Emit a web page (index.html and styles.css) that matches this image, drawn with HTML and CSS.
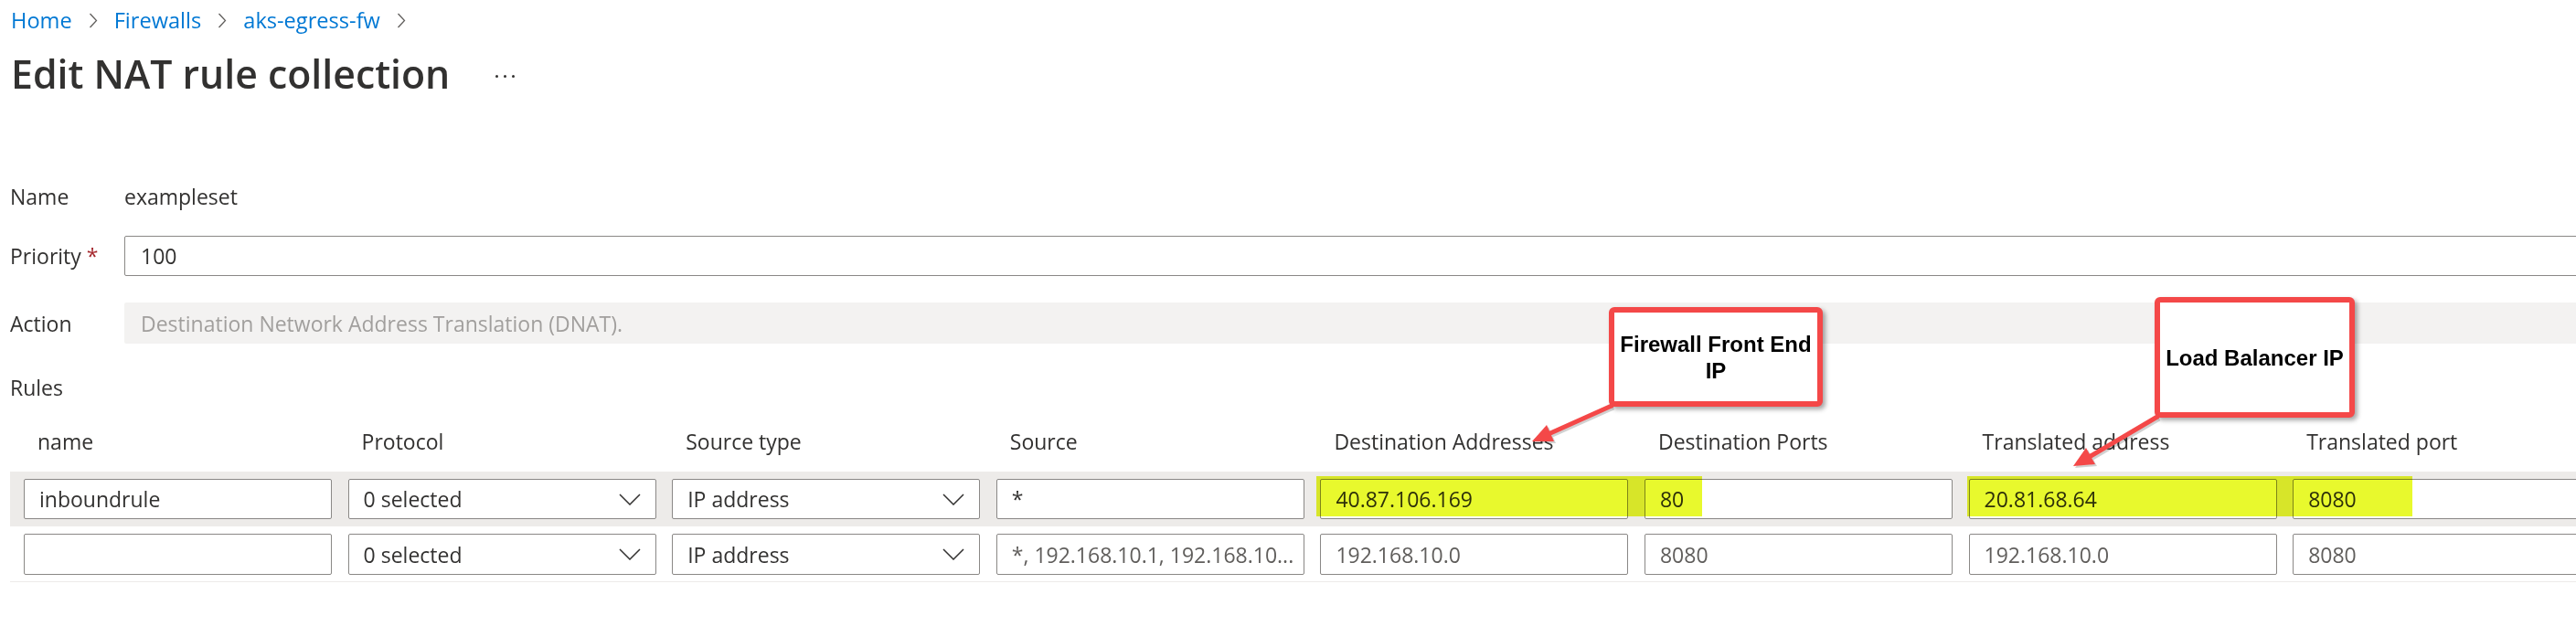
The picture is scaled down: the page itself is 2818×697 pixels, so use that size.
FILE: index.html
```html
<!DOCTYPE html>
<html lang="en">
<head>
<meta charset="utf-8">
<title>Edit NAT rule collection</title>
<link rel="stylesheet" href="styles.css">
</head>
<body>
<div class="page">
  <nav class="breadcrumb">
    <a class="crumb" href="#">Home</a>
    <svg class="crumb-sep" width="10" height="17" viewBox="0 0 10 17"><path d="M1.5 1 L8.5 8.5 L1.5 16" fill="none" stroke="#605e5c" stroke-width="1.3"/></svg>
    <a class="crumb" href="#">Firewalls</a>
    <svg class="crumb-sep" width="10" height="17" viewBox="0 0 10 17"><path d="M1.5 1 L8.5 8.5 L1.5 16" fill="none" stroke="#605e5c" stroke-width="1.3"/></svg>
    <a class="crumb" href="#">aks-egress-fw</a>
    <svg class="crumb-sep" width="10" height="17" viewBox="0 0 10 17"><path d="M1.5 1 L8.5 8.5 L1.5 16" fill="none" stroke="#605e5c" stroke-width="1.3"/></svg>
  </nav>

  <header class="title-row">
    <h1 class="title">Edit NAT rule collection</h1>
    <span class="more"><i></i><i></i><i></i></span>
  </header>

  <section class="form">
    <div class="form-row name-row">
      <div class="label">Name</div>
      <div class="value">exampleset</div>
    </div>
    <div class="form-row priority-row">
      <div class="label">Priority <span class="req">*</span></div>
      <div class="field">100</div>
    </div>
    <div class="form-row action-row">
      <div class="label">Action</div>
      <div class="field disabled">Destination Network Address Translation (DNAT).</div>
    </div>
  </section>

  <div class="rules-label">Rules</div>

  <div class="rules">
    <div class="grid header">
      <div class="th">name</div>
      <div class="th">Protocol</div>
      <div class="th">Source type</div>
      <div class="th">Source</div>
      <div class="th">Destination Addresses</div>
      <div class="th">Destination Ports</div>
      <div class="th">Translated address</div>
      <div class="th">Translated port</div>
    </div>
    <div class="grid row selected">
      <div class="cell">inboundrule</div>
      <div class="cell select"><span>0 selected</span><svg width="24" height="13" viewBox="0 0 24 13"><path d="M1 1 L12 12 L23 1" fill="none" stroke="#323130" stroke-width="1.5"/></svg></div>
      <div class="cell select"><span>IP address</span><svg width="24" height="13" viewBox="0 0 24 13"><path d="M1 1 L12 12 L23 1" fill="none" stroke="#323130" stroke-width="1.5"/></svg></div>
      <div class="cell">*</div>
      <div class="cell">40.87.106.169</div>
      <div class="cell">80</div>
      <div class="cell">20.81.68.64</div>
      <div class="cell">8080</div>
    </div>
    <div class="grid row last">
      <div class="cell"></div>
      <div class="cell select"><span>0 selected</span><svg width="24" height="13" viewBox="0 0 24 13"><path d="M1 1 L12 12 L23 1" fill="none" stroke="#323130" stroke-width="1.5"/></svg></div>
      <div class="cell select"><span>IP address</span><svg width="24" height="13" viewBox="0 0 24 13"><path d="M1 1 L12 12 L23 1" fill="none" stroke="#323130" stroke-width="1.5"/></svg></div>
      <div class="cell placeholder">*, 192.168.10.1, 192.168.10...</div>
      <div class="cell placeholder">192.168.10.0</div>
      <div class="cell placeholder">8080</div>
      <div class="cell placeholder">192.168.10.0</div>
      <div class="cell placeholder">8080</div>
    </div>
  </div>

  <!-- annotation overlays -->
  <div class="hl hl-dest"></div>
  <div class="hl hl-trans"></div>

  <div class="callout callout-fw">Firewall Front End<br>IP</div>
  <div class="callout callout-lb">Load Balancer IP</div>

  <svg class="arrows" width="2818" height="697" viewBox="0 0 2818 697">
    <g class="arrow-shadow" transform="translate(2 2)">
      <line x1="1763" y1="444" x2="1696" y2="474" />
      <polygon points="1676,483 1692,465 1700,483" />
      <line x1="2360" y1="456" x2="2287" y2="499" />
      <polygon points="2268,510 2282,490 2292,508" />
    </g>
    <g class="arrow">
      <line x1="1763" y1="444" x2="1696" y2="474" />
      <polygon points="1676,483 1692,465 1700,483" />
      <line x1="2360" y1="456" x2="2287" y2="499" />
      <polygon points="2268,510 2282,490 2292,508" />
    </g>
  </svg>
</div>
</body>
</html>
```

FILE: styles.css
```css
html, body {
  margin: 0;
  padding: 0;
  background: #ffffff;
  overflow: hidden;
}

body {
  font-family: "Open Sans", "Noto Sans", "Liberation Sans", sans-serif;
  color: #323130;
}

.page {
  position: relative;
  width: 2880px;
  height: 697px;
}

/* breadcrumb */
.breadcrumb {
  display: flex;
  align-items: center;
  gap: 18px;
  height: 36px;
  padding: 4px 0 0 12px;
  font-size: 23.6px;
}

.crumb {
  color: #0078d4;
  text-decoration: none;
  line-height: 36px;
}

.crumb-sep {
  display: block;
}

/* title */
.title-row {
  display: flex;
  align-items: center;
  gap: 50px;
  margin: 13px 0 0 12px;
  height: 56px;
}

.title {
  margin: 0;
  font-size: 42.8px;
  font-weight: 600;
  line-height: 56px;
  color: #323130;
}

.more {
  display: flex;
  gap: 6px;
  padding-top: 4px;
}

.more i {
  display: block;
  width: 3px;
  height: 3px;
  background: #323130;
  border-radius: 50%;
}

/* form */
.form {
  margin: 84px 0 0 11px;
}

.form-row {
  display: flex;
  align-items: center;
  height: 44px;
  font-size: 23px;
}

.label {
  width: 125px;
  flex: none;
}

.req {
  color: #a4262c;
}

.priority-row {
  margin-top: 21px;
}

.action-row {
  margin-top: 29px;
  height: 45px;
}

.field {
  flex: 1;
  height: 100%;
  box-sizing: border-box;
  border: 1px solid #8a8886;
  border-radius: 2px;
  padding-left: 17px;
  display: flex;
  align-items: center;
}

.field.disabled {
  border: none;
  background: #f3f2f1;
  color: #a19f9d;
  padding-left: 18px;
}

.rules-label {
  margin: 33px 0 0 11px;
  font-size: 23px;
  line-height: 30px;
}

/* rules table */
.rules {
  margin: 0 0 0 11px;
}

.grid {
  display: grid;
  grid-template-columns: repeat(8, 337px);
  column-gap: 17.6px;
  padding-left: 15px;
  font-size: 23px;
}

.header {
  margin-top: 22px;
  height: 44px;
  align-items: center;
  margin-bottom: 11px;
}

.th {
  padding-left: 15px;
  white-space: nowrap;
}

.row {
  padding-top: 8px;
  padding-bottom: 8px;
}

.row.selected {
  background: #edebe9;
}

.row.last {
  padding-bottom: 7px;
  border-bottom: 1px solid #edebe9;
}

.cell {
  box-sizing: border-box;
  height: 44px;
  background: #ffffff;
  border: 1px solid #8a8886;
  border-radius: 2px;
  padding: 0 16px;
  display: flex;
  align-items: center;
  justify-content: space-between;
  white-space: nowrap;
  overflow: hidden;
}

.row.last .cell {
  height: 45px;
}

.cell.placeholder {
  color: #605e5c;
}

.cell.select svg {
  flex: none;
}

/* annotation overlays */
.hl {
  position: absolute;
  top: 521px;
  height: 44px;
  background: rgb(232, 249, 45);
  mix-blend-mode: multiply;
}

.hl-dest {
  left: 1440px;
  width: 422px;
}

.hl-trans {
  left: 2152px;
  width: 487px;
}

.callout {
  position: absolute;
  box-sizing: border-box;
  border: 6px solid #f44848;
  border-radius: 6px;
  background: #ffffff;
  box-shadow: 3px 3px 5px rgba(0, 0, 0, 0.35);
  display: flex;
  align-items: center;
  justify-content: center;
  text-align: center;
  font-family: "Liberation Sans", Arial, sans-serif;
  font-weight: 700;
  font-size: 24px;
  line-height: 29px;
  color: #000000;
}

.callout-fw {
  left: 1760px;
  top: 336px;
  width: 234px;
  height: 109px;
}

.callout-lb {
  left: 2357px;
  top: 325px;
  width: 219px;
  height: 132px;
}

.arrows {
  position: absolute;
  left: 0;
  top: 0;
  pointer-events: none;
}

.arrow line {
  stroke: #f44848;
  stroke-width: 5;
  stroke-linecap: round;
}

.arrow polygon {
  fill: #f44848;
}

.arrow-shadow line {
  stroke: rgba(0, 0, 0, 0.18);
  stroke-width: 5;
}

.arrow-shadow polygon {
  fill: rgba(0, 0, 0, 0.18);
}
```
